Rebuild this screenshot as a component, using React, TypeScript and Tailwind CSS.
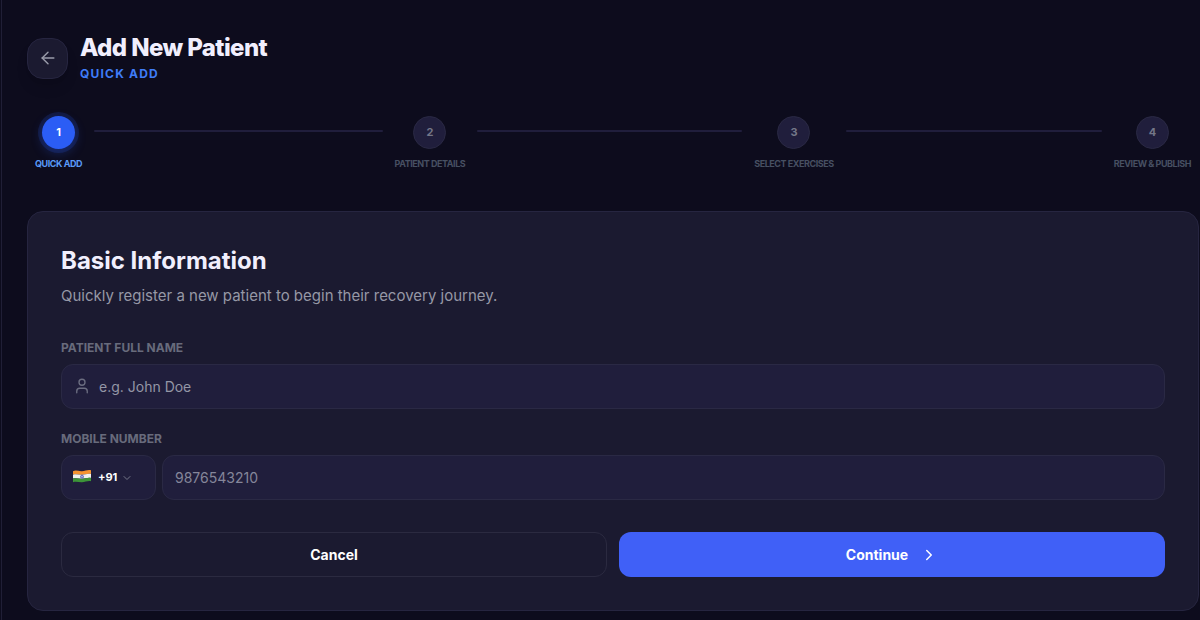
import React from "react";
import { ArrowLeft, ChevronDown, ChevronRight, User } from "lucide-react";

const steps = ["Quick Add", "Patient Details", "Select Exercises", "Review & Publish"];

const Flag = () => (
  <svg viewBox="0 0 20 14" className="w-5 h-[14px]" aria-hidden="true">
    <path d="M1 2.2C4 .6 7 2.6 10 2.2S16 .4 19 1.2V5C16 4.2 13 5.6 10 5.8S4 4.6 1 5.8Z" fill="#f59331" />
    <path d="M1 5.8C4 4.6 7 6 10 5.8S16 4.2 19 5V9C16 8.4 13 9.6 10 9.8S4 8.4 1 9.6Z" fill="#f1f1ee" />
    <path d="M1 9.6C4 8.4 7 10 10 9.8S16 8.4 19 9V12.2C16 11.6 13 13 10 13.2S4 12 1 13.2Z" fill="#3c9438" />
    <circle cx="10" cy="7.7" r="1.5" fill="#a9aee0" stroke="#4148a8" strokeWidth="0.7" />
  </svg>
);

const Stepper = () => {
  return (
    <ol className="flex items-start px-2 mt-[34px]">
      {steps.map((step, i) => {
        const active = i === 0;
        const last = i === steps.length - 1;
        return (
          <li key={step} className={last ? "flex" : "flex flex-1 items-start"}>
            <div className="flex flex-col items-center gap-2">
              <div
                className={
                  active
                    ? "size-[33px] rounded-full flex items-center justify-center text-[11px] font-bold bg-[#2b5df5] text-white shadow-[0_0_0_4px_rgba(43,93,245,0.16),0_4px_12px_rgba(43,93,245,0.3)]"
                    : "size-[33px] rounded-full flex items-center justify-center text-[11px] font-bold bg-[#201e3c] text-[#747788] border border-[#2a2944]"
                }
              >
                {i + 1}
              </div>
              <span
                className={
                  active
                    ? "text-[9px] leading-[14px] font-bold uppercase tracking-tighter whitespace-nowrap text-[#5a9bf8]"
                    : "text-[9px] leading-[14px] font-bold uppercase tracking-tighter whitespace-nowrap text-[#475062]"
                }
              >
                {step}
              </span>
            </div>
            {!last && <div className="flex-1 h-[2px] mx-3 mt-[14px] rounded-full bg-[#201e3c]" />}
          </li>
        );
      })}
    </ol>
  );
};

const App = () => {
  return (
    <div className="min-h-screen bg-[#0d0c1d] pl-px font-['Inter',sans-serif]">
      <main className="min-h-screen border-l border-[#201f36] pl-[25px] pr-px pt-[34px] pb-2">
        <header className="flex items-center gap-3">
          <button
            type="button"
            aria-label="Go back"
            className="size-[41px] rounded-2xl flex items-center justify-center bg-[#1b1a30] border border-[#262540] text-[#9a9caa] shadow-lg"
          >
            <ArrowLeft size={20} strokeWidth={1.7} />
          </button>
          <div>
            <h1 className="text-2xl leading-7 font-extrabold tracking-tight text-[#f1effd]">Add New Patient</h1>
            <p className="mt-1 text-xs leading-4 font-bold uppercase tracking-widest text-[#3f7cf8]">Quick Add</p>
          </div>
        </header>

        <Stepper />

        <form className="mt-10 p-[33px] rounded-2xl bg-[#1b1a30] border border-[#262540]">
          <h2 className="text-2xl leading-8 font-bold text-[#f1effd]">Basic Information</h2>
          <p className="mt-[7px] text-[15px] leading-6 text-[#9698a6]">
            Quickly register a new patient to begin their recovery journey.
          </p>

          <label htmlFor="name" className="block mt-8 text-xs leading-4 font-bold uppercase text-[#686b7c]">
            Patient Full Name
          </label>
          <div className="relative mt-2">
            <User size={18} strokeWidth={1.8} className="absolute left-3 top-[13px] text-[#6b6d80]" />
            <input
              id="name"
              type="text"
              placeholder="e.g. John Doe"
              className="w-full h-[45px] pl-[37px] pr-3 rounded-xl bg-[#201e3c] border border-[#2a2944] text-sm text-white placeholder:text-[#9496a6]"
            />
          </div>

          <label htmlFor="mobile" className="block mt-[22px] text-xs leading-4 font-bold uppercase text-[#686b7c]">
            Mobile Number
          </label>
          <div className="flex gap-[6px] mt-2">
            <div className="relative">
              <div className="absolute left-[11px] top-[14px] pointer-events-none">
                <Flag />
              </div>
              <select
                aria-label="Country code"
                className="w-[95px] h-[45px] pl-9 appearance-none rounded-xl bg-[#201e3c] border border-[#2a2944] text-[11px] font-bold text-white"
              >
                <option>+91</option>
              </select>
              <ChevronDown size={12} className="absolute left-[60px] top-[17px] pointer-events-none text-[#747688]" />
            </div>
            <input
              id="mobile"
              type="tel"
              placeholder="9876543210"
              className="flex-1 min-w-0 h-[45px] px-3 rounded-xl bg-[#201e3c] border border-[#2a2944] text-sm text-white placeholder:text-[#85869a]"
            />
          </div>

          <div className="grid grid-cols-2 gap-3 mt-8">
            <button type="button" className="h-[45px] rounded-xl border border-[#2b2a40] text-sm font-bold text-white">
              Cancel
            </button>
            <button
              type="submit"
              className="h-[45px] rounded-xl flex items-center justify-center gap-3 bg-[#4060f7] text-sm font-bold text-white"
            >
              Continue
              <ChevronRight size={18} />
            </button>
          </div>
        </form>
      </main>
    </div>
  );
};

export default App;
